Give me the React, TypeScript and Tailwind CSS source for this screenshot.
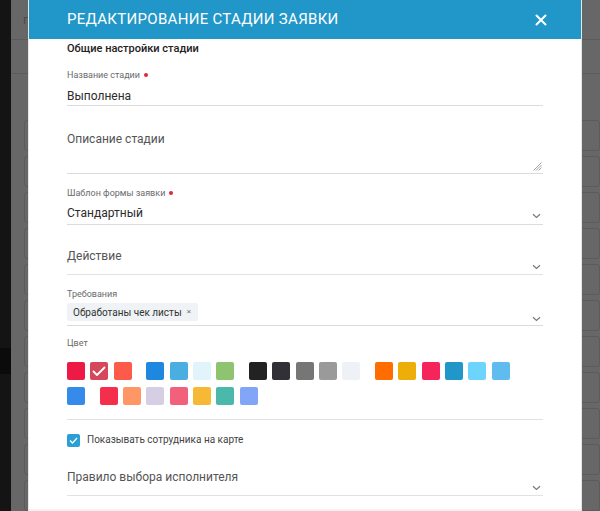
import React from "react";

const font = "font-['Roboto','Noto_Sans',sans-serif]";

const swatchRows: { cls: string; selected?: boolean }[][][] = [
  [
    [{ cls: "bg-[#ee1a45]" }, { cls: "bg-[#d5475a]", selected: true }, { cls: "bg-[#fd5a4a]" }],
    [{ cls: "bg-[#1e88e0]" }, { cls: "bg-[#4aaee0]" }, { cls: "bg-[#e1f4fc]" }, { cls: "bg-[#8ec46f]" }],
    [
      { cls: "bg-[#222222]" },
      { cls: "bg-[#303036]" },
      { cls: "bg-[#767676]" },
      { cls: "bg-[#9a9a9a]" },
      { cls: "bg-[#eef2f7]" },
    ],
    [
      { cls: "bg-[#ff6d00]" },
      { cls: "bg-[#eeae0a]" },
      { cls: "bg-[#f5255c]" },
      { cls: "bg-[#2197c9]" },
      { cls: "bg-[#6dd4fd]" },
      { cls: "bg-[#60bbef]" },
    ],
  ],
  [
    [{ cls: "bg-[#368ae9]" }],
    [
      { cls: "bg-[#f52e4d]" },
      { cls: "bg-[#fe9666]" },
      { cls: "bg-[#d5cee5]" },
      { cls: "bg-[#f2617c]" },
      { cls: "bg-[#f7b935]" },
      { cls: "bg-[#4ab8ab]" },
      { cls: "bg-[#83a5f7]" },
    ],
  ],
];

function Chevron() {
  return (
    <svg width="9" height="6" viewBox="0 0 9 6" className="shrink-0">
      <polyline points="1,1.2 4.5,4.5 8,1.2" fill="none" stroke="#7a7a7a" strokeWidth="1.2" />
    </svg>
  );
}

function Label({ children, required }: { children: React.ReactNode; required?: boolean }) {
  return (
    <div className="flex items-center text-[9px] leading-[12px] text-[#6b6b6b]">
      {children}
      {required && <span className="ml-[4px] w-[4px] h-[4px] rounded-full bg-[#e0263a]" />}
    </div>
  );
}

export default function App() {
  return (
    <div className={`relative w-[600px] h-[511px] overflow-hidden ${font}`}>
      {/* page behind the overlay */}
      <div className="flex h-full">
        <div className="w-[11px] bg-[#141414] flex flex-col pt-[348px]">
          <div className="h-[26px] bg-[#0b0b0b]" />
        </div>
        <div className="flex-1 bg-[#676767] flex flex-col">
          <div className="h-[44px] border-b border-[#5c5c5c] pl-[12px] pt-[10px] text-[13px] text-[#4a4a4a]">г</div>
          <div className="h-[38px] border-b border-[#5c5c5c]" />
          <div className="flex flex-col gap-[5px] pl-[13px] pt-[46px]">
            {Array.from({ length: 11 }).map((_, i) => (
              <div key={i} className="h-[31px] rounded-[3px] border border-[#5c5c5c]" />
            ))}
          </div>
        </div>
      </div>

      {/* modal */}
      <div className="absolute left-[28px] top-0 w-[554px] h-[511px] bg-white flex flex-col border-x border-[#e6e6e6]">
        <div className="h-[39px] shrink-0 bg-[#2196c8] flex items-center justify-between pl-[38px] pr-[34px]">
          <div className="text-[15px] text-white uppercase tracking-[0.3px]">Редактирование стадии заявки</div>
          <svg width="12" height="12" viewBox="0 0 12 12">
            <path d="M1.5 1.5 L10.5 10.5 M10.5 1.5 L1.5 10.5" stroke="white" strokeWidth="2" strokeLinecap="round" />
          </svg>
        </div>

        <div className="flex-1 flex flex-col px-[38px]">
          <div className="pt-[2px] text-[11px] leading-[16px] font-medium text-[#222]">Общие настройки стадии</div>

          <div className="mt-[12px]">
            <Label required>Название стадии</Label>
          </div>
          <div className="mt-[6px] h-[19px] border-b border-[#dcdcdc] text-[12px] leading-[18px] text-[#2b2b2b]">
            Выполнена
          </div>

          <div className="mt-[24px] h-[44px] border-b-[1.5px] border-[#dcdcdc] relative text-[12px] leading-[18px] text-[#555]">
            Описание стадии
            <svg width="9" height="9" viewBox="0 0 9 9" className="absolute right-[1px] bottom-[2px]">
              <path d="M8.5 0.5 L0.5 8.5 M8.5 3 L3 8.5 M8.5 5.5 L5.5 8.5" stroke="#8a8a8a" strokeWidth="0.8" />
            </svg>
          </div>

          <div className="mt-[13px]">
            <Label required>Шаблон формы заявки</Label>
          </div>
          <div className="mt-[5px] h-[21px] border-b-[1.5px] border-[#dcdcdc] flex justify-between items-start text-[12px] leading-[18px] text-[#2b2b2b]">
            <span>Стандартный</span>
            <div className="pt-[9px] pr-[2px]">
              <Chevron />
            </div>
          </div>

          <div className="mt-[22px] h-[28px] border-b-[1.5px] border-[#e2e2e2] flex justify-between items-start text-[12px] leading-[18px] text-[#555]">
            <span>Действие</span>
            <div className="pt-[17px] pr-[2px]">
              <Chevron />
            </div>
          </div>

          <div className="mt-[13px]">
            <Label>Требования</Label>
          </div>
          <div className="h-[26px] border-b-[1.5px] border-[#dcdcdc] flex justify-between items-start">
            <div className="mt-[3px] h-[18px] rounded-[2px] bg-[#eff3f5] flex items-center pl-[6px] pr-[7px] gap-[5px] text-[10px] text-[#333]">
              <span>Обработаны чек листы</span>
              <span className="text-[8px] text-[#777]">×</span>
            </div>
            <div className="pt-[16px] pr-[2px]">
              <Chevron />
            </div>
          </div>

          <div className="mt-[11px]">
            <Label>Цвет</Label>
          </div>
          <div className="mt-[13px] pb-[14px] border-b-[1.5px] border-[#e2e2e2] flex flex-col gap-[7px]">
            {swatchRows.map((row, r) => (
              <div key={r} className="flex gap-x-[14.67px]">
                {row.map((group, g) => (
                  <div key={g} className="flex gap-x-[5.33px]">
                    {group.map((s, i) => (
                      <div
                        key={i}
                        className={`w-[18px] h-[18px] rounded-[2px] flex items-center justify-center ${s.cls}`}
                      >
                        {s.selected && (
                          <svg width="14" height="11" viewBox="0 0 14 11">
                            <polyline
                              points="1.5,5.5 5,9 12.5,1.5"
                              fill="none"
                              stroke="white"
                              strokeWidth="1.8"
                              strokeLinecap="round"
                              strokeLinejoin="round"
                            />
                          </svg>
                        )}
                      </div>
                    ))}
                  </div>
                ))}
              </div>
            ))}
          </div>

          <div className="mt-[13px] flex items-center gap-[7px]">
            <div className="w-[13px] h-[13px] rounded-[2px] bg-[#2a9fd6] flex items-center justify-center">
              <svg width="9" height="7" viewBox="0 0 9 7">
                <polyline points="1,3.5 3.5,6 8,1" fill="none" stroke="white" strokeWidth="1.3" />
              </svg>
            </div>
            <span className="text-[10px] leading-[14px] text-[#444]">Показывать сотрудника на карте</span>
          </div>

          <div className="mt-[21px] h-[28px] border-b-[1.5px] border-[#e2e2e2] flex justify-between items-start text-[12px] leading-[18px] text-[#555]">
            <span>Правило выбора исполнителя</span>
            <div className="pt-[17px] pr-[2px]">
              <Chevron />
            </div>
          </div>
        </div>
        <div className="h-[2px] bg-[#f2f2f2]" />
      </div>
    </div>
  );
}
